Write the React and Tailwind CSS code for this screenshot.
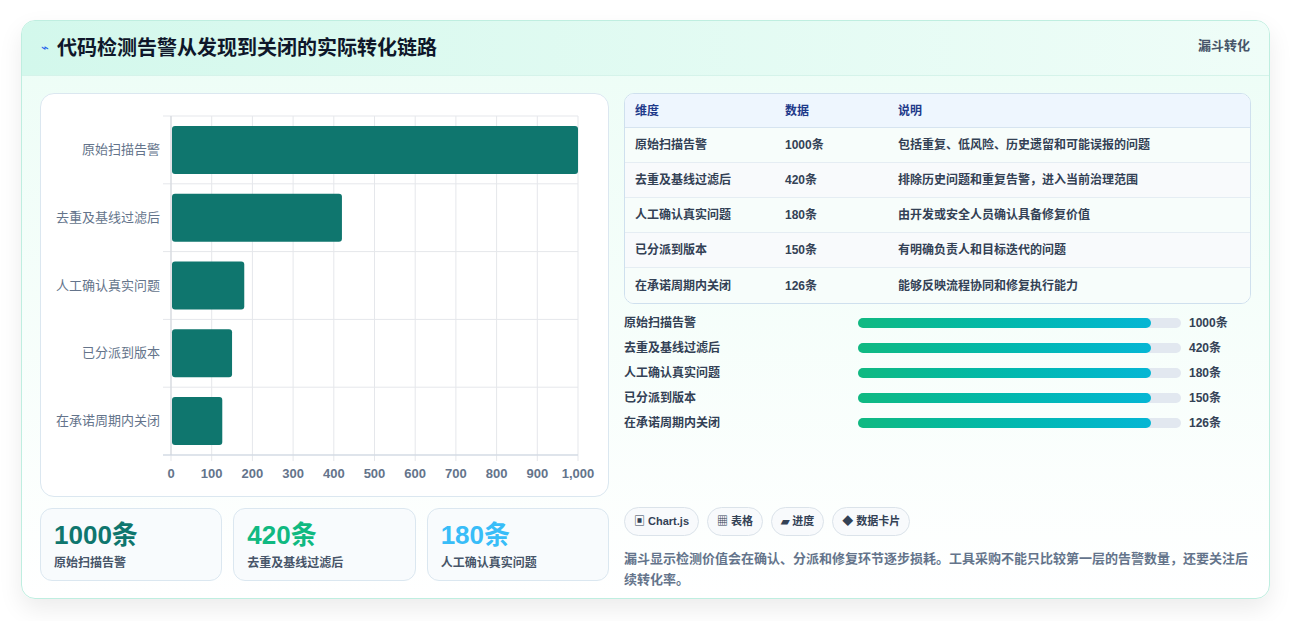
import React from "react";

const rows = [
  ["原始扫描告警", 1000, "包括重复、低风险、历史遗留和可能误报的问题"],
  ["去重及基线过滤后", 420, "排除历史问题和重复告警，进入当前治理范围"],
  ["人工确认真实问题", 180, "由开发或安全人员确认具备修复价值"],
  ["已分派到版本", 150, "有明确负责人和目标迭代的问题"],
  ["在承诺周期内关闭", 126, "能够反映流程协同和修复执行能力"],
];

function Chart() {
  const x0 = 130, x1 = 537, y0 = 22, y1 = 361;
  const w = x1 - x0;
  const ticks = [0, 100, 200, 300, 400, 500, 600, 700, 800, 900, 1000];
  return (
    <svg width="568" height="403" className="block">
      {ticks.map((t) => {
        const x = x0 + (t / 1000) * w;
        return <line key={t} x1={x} x2={x} y1={y0} y2={y1 + 6} stroke="#e5e7eb" />;
      })}
      {[0, 1, 2, 3, 4, 5].map((i) => (
        <line key={i} x1={x0 - 8} x2={x1} y1={y0 + i * 67.8} y2={y0 + i * 67.8} stroke="#e5e7eb" />
      ))}
      <line x1={x0} x2={x0} y1={y0} y2={y1} stroke="#d1d5db" />
      <line x1={x0 - 8} x2={x1} y1={y1} y2={y1} stroke="#cbd5e1" />
      {rows.map((r, i) => {
        const cy = y0 + i * 67.8 + 33.9;
        return (
          <g key={i}>
            <rect x={x0 + 1} y={cy - 24} width={(r[1] / 1000) * w - 1} height={48} rx={3} fill="#0f766e" />
            <text x={119} y={cy + 4} textAnchor="end" fontSize="13" fill="#64748b">{r[0]}</text>
          </g>
        );
      })}
      {ticks.map((t) => (
        <text key={t} x={x0 + (t / 1000) * w} y={384} textAnchor="middle" fontSize="13" fontWeight="bold" fill="#64748b">
          {t === 1000 ? "1,000" : t}
        </text>
      ))}
    </svg>
  );
}

export default function App() {
  return (
    <div className="w-[1291px] h-[621px] bg-white pt-[20px] px-[21px]" style={{ fontFamily: '"Liberation Sans", "Noto Sans CJK SC", sans-serif' }}>
      <div className="w-[1249px] h-[579px] rounded-[14px] border border-[#bfeee0] shadow-[0_10px_24px_rgba(0,0,0,0.08)] overflow-hidden bg-gradient-to-b from-[#ecfdf6] to-white">
        <div className="h-[55px] flex items-center justify-between px-[19px] bg-gradient-to-r from-[#d3f8ec] to-[#effdf8] border-b border-[#d5f3ea]">
          <div className="flex items-center gap-[8px]">
            <span className="text-[#2563eb] text-[13px]">⌁</span>
            <h1 className="text-[20px] font-bold text-[#0f172a]">代码检测告警从发现到关闭的实际转化链路</h1>
          </div>
          <span className="text-[13px] font-bold text-[#475569] self-start mt-[15px]">漏斗转化</span>
        </div>
        <div className="flex gap-[15px] px-[18px] pt-[17px]">
          <div className="w-[569px] flex flex-col gap-[11px]">
            <div className="h-[404px] rounded-[14px] border border-[#dbe7f0] bg-white">
              <Chart />
            </div>
            <div className="flex gap-[11px]">
              {[["1000条", "#0f766e", "原始扫描告警"], ["420条", "#10b981", "去重及基线过滤后"], ["180条", "#38bdf8", "人工确认真实问题"]].map((c, i) => (
                <div key={i} className="w-[183px] h-[73px] rounded-[12px] border border-[#dbe7f0] bg-[#f8fbfd] px-[13px] pt-[9px]">
                  <div className="text-[26px] font-bold leading-[34px]" style={{ color: c[1] }}>{c[0]}</div>
                  <div className="text-[12px] text-[#475569] font-bold mt-[2px]">{c[2]}</div>
                </div>
              ))}
            </div>
          </div>
          <div className="w-[629px] flex flex-col">
            <div className="rounded-[10px] border border-[#cfe0ee] overflow-hidden bg-white text-[12px] font-bold text-[#334155]">
              <div className="flex h-[34px] items-center bg-[#eef6fe] text-[#1e3a8a] border-b border-[#d6e4f0]">
                <div className="w-[160px] pl-[10px]">维度</div><div className="w-[113px]">数据</div><div>说明</div>
              </div>
              {rows.map((r, i) => (
                <div key={i} className={`flex h-[35px] items-center ${i < 4 ? "border-b border-[#e5edf3]" : ""} ${i % 2 ? "bg-[#f8fafc]" : "bg-[#f7fdfb]"}`}>
                  <div className="w-[160px] pl-[10px]">{r[0]}</div><div className="w-[113px]">{r[1]}条</div><div>{r[2]}</div>
                </div>
              ))}
            </div>
            <div className="mt-[10px] flex flex-col gap-[7px] text-[12px] font-bold text-[#334155]">
              {rows.map((r, i) => (
                <div key={i} className="flex items-center h-[18px]">
                  <div className="w-[234px]">{r[0]}</div>
                  <div className="w-[323px] h-[10px] rounded-full bg-[#e2e8f0]">
                    <div className="h-full w-[293px] rounded-full bg-gradient-to-r from-[#10b981] to-[#06b6d4]" />
                  </div>
                  <div className="ml-[8px]">{r[1]}条</div>
                </div>
              ))}
            </div>
            <div className="mt-[75px] flex gap-[8px]">
              {["▣ Chart.js", "▦ 表格", "▰ 进度", "◆ 数据卡片"].map((t) => (
                <span key={t} className="h-[29px] px-[9px] flex items-center rounded-full border border-[#dbe3ea] bg-[#f8fafc] text-[11px] font-bold text-[#334155]">{t}</span>
              ))}
            </div>
            <p className="mt-[12px] text-[13px] leading-[21px] font-bold text-[#64748b]">漏斗显示检测价值会在确认、分派和修复环节逐步损耗。工具采购不能只比较第一层的告警数量，还要关注后续转化率。</p>
          </div>
        </div>
      </div>
    </div>
  );
}
